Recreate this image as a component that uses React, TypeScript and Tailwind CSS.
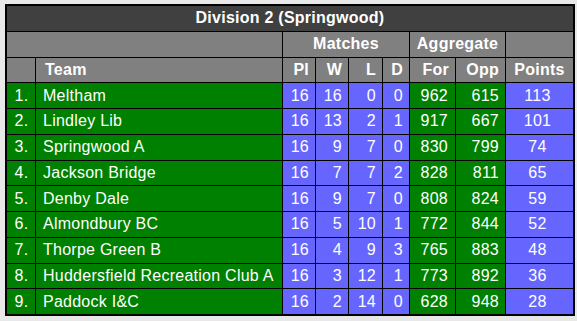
import React from "react";

const rows: [string, string, number, number, number, number, number, number, number][] = [
  ["1.", "Meltham", 16, 16, 0, 0, 962, 615, 113],
  ["2.", "Lindley Lib", 16, 13, 2, 1, 917, 667, 101],
  ["3.", "Springwood A", 16, 9, 7, 0, 830, 799, 74],
  ["4.", "Jackson Bridge", 16, 7, 7, 2, 828, 811, 65],
  ["5.", "Denby Dale", 16, 9, 7, 0, 808, 824, 59],
  ["6.", "Almondbury BC", 16, 5, 10, 1, 772, 844, 52],
  ["7.", "Thorpe Green B", 16, 4, 9, 3, 765, 883, 48],
  ["8.", "Huddersfield Recreation Club A", 16, 3, 12, 1, 773, 892, 36],
  ["9.", "Paddock I&C", 16, 2, 14, 0, 628, 948, 28],
];

const green = "bg-[#008000]";
const blue = "bg-[#6666ff]";
const hdr = "bg-[#808080] font-bold";

export default function App() {
  return (
    <div className="min-h-[321px] w-[577px] bg-[#e8e8e8] pt-[4px] pl-[5px]" style={{ fontFamily: '"Liberation Sans", Arial, sans-serif' }}>
      <div className="grid h-[312px] w-[570px] grid-cols-[28px_246px_32px_32px_33px_26px_45px_49px_67px] grid-rows-[repeat(12,minmax(0,1fr))] gap-px bg-black p-[2px] text-[16px] leading-none tracking-[0.25px] text-white">
        <div className="col-span-9 flex items-center justify-center bg-[#404040] font-bold">Division 2 (Springwood)</div>
        <div className={`col-span-2 ${hdr}`}></div>
        <div className={`col-span-4 flex items-center justify-center ${hdr}`}>Matches</div>
        <div className={`col-span-2 flex items-center justify-center ${hdr}`}>Aggregate</div>
        <div className={hdr}></div>
        <div className={hdr}></div>
        <div className={`flex items-center pl-[9px] ${hdr}`}>Team</div>
        {["Pl", "W", "L", "D", "For", "Opp"].map((h) => (
          <div key={h} className={`flex items-center justify-end pr-[6px] ${hdr}`}>{h}</div>
        ))}
        <div className={`flex items-center justify-center ${hdr}`}>Points</div>
        {rows.map((r) => (
          <React.Fragment key={r[0]}>
            <div className={`flex items-center justify-center pl-[1px] ${green}`}>{r[0]}</div>
            <div className={`flex items-center pl-[7px] ${green}`}>{r[1]}</div>
            <div className={`flex items-center justify-end pr-[6px] ${blue}`}>{r[2]}</div>
            <div className={`flex items-center justify-end pr-[6px] ${blue}`}>{r[3]}</div>
            <div className={`flex items-center justify-end pr-[6px] ${blue}`}>{r[4]}</div>
            <div className={`flex items-center justify-end pr-[6px] ${blue}`}>{r[5]}</div>
            <div className={`flex items-center justify-end pr-[7px] ${green}`}>{r[6]}</div>
            <div className={`flex items-center justify-end pr-[6px] ${green}`}>{r[7]}</div>
            <div className={`flex items-center justify-center pr-[4px] ${blue}`}>{r[8]}</div>
          </React.Fragment>
        ))}
      </div>
    </div>
  );
}
